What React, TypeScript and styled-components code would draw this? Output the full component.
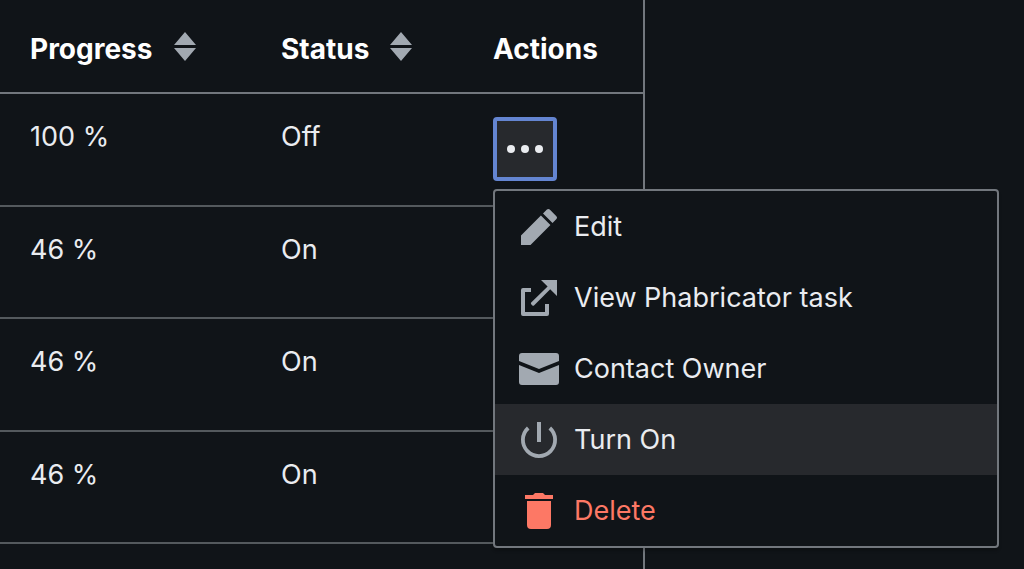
import React from "react";
import styled, { createGlobalStyle, css } from "styled-components";

const color = {
  base: "#101418",
  raised: "#27292d",
  border: "#72777d",
  divider: "#54595d",
  text: "#eaecf0",
  heading: "#ffffff",
  icon: "#a2a9b1",
  focus: "#6485d1",
  danger: "#fd7865",
};

const GlobalStyle = createGlobalStyle`
  *, *::before, *::after { box-sizing: border-box; }
  body {
    margin: 0;
    background: ${color.base};
    color: ${color.text};
    font-family: Inter, "Liberation Sans", sans-serif;
    font-size: 27px;
    line-height: 40px;
  }
`;

const Page = styled.main`
  display: flex;
  min-height: 100vh;
`;

const Panel = styled.section`
  flex: 0 0 63%;
  min-width: 620px;
  border-right: 2px solid ${color.border};
`;

const Table = styled.table`
  width: 100%;
  table-layout: fixed;
  border-collapse: separate;
  border-spacing: 0;
`;

const HeadCell = styled.th<{ $width?: number }>`
  width: ${(p) => (p.$width ? `${p.$width}px` : "auto")};
  height: 94px;
  padding: 6px 0 0 30px;
  border-bottom: 2px solid ${color.border};
  color: ${color.heading};
  font-size: 28px;
  font-weight: 700;
  text-align: left;
  vertical-align: middle;
`;

const SortButton = styled.button`
  display: flex;
  align-items: center;
  gap: 21px;
  padding: 0;
  border: 0;
  background: none;
  color: inherit;
  font: inherit;
  cursor: pointer;
`;

const SortIcon = styled.svg`
  flex: none;
  width: 22px;
  height: 29px;
  margin-bottom: 6px;
  fill: ${color.icon};
`;

const Row = styled.tr`
  height: 112px;
  &:nth-child(odd) { height: 113px; }
`;

const Cell = styled.td`
  padding: 23px 0 0 30px;
  border-bottom: 2px solid ${color.divider};
  vertical-align: top;
`;

const MenuAnchor = styled.div`
  position: relative;
  width: 64px;
`;

const MoreButton = styled.button<{ $open: boolean }>`
  display: flex;
  align-items: center;
  justify-content: center;
  width: 64px;
  height: 64px;
  padding: 0;
  border: 4px solid transparent;
  border-radius: 4px;
  background: none;
  color: ${color.text};
  cursor: pointer;
  ${(p) =>
    p.$open &&
    css`
      border-color: ${color.focus};
      background: ${color.raised};
    `}
`;

const Menu = styled.ul`
  position: absolute;
  z-index: 1;
  top: 72px;
  left: 0;
  width: 506px;
  margin: 0;
  padding: 0;
  border: 2px solid ${color.border};
  border-radius: 4px;
  background: ${color.base};
  box-shadow: 0 3px 3px rgba(0, 0, 0, 0.2);
  list-style: none;
`;

const MenuItem = styled.button<{ $active?: boolean; $danger?: boolean }>`
  display: flex;
  align-items: center;
  gap: 15px;
  width: 100%;
  height: 71px;
  padding: 0 24px;
  border: 0;
  background: ${(p) => (p.$active ? color.raised : "transparent")};
  color: ${(p) => (p.$danger ? color.danger : color.text)};
  font: inherit;
  text-align: left;
  cursor: pointer;
`;

const MenuIcon = styled.svg<{ $danger?: boolean }>`
  flex: none;
  width: 40px;
  height: 40px;
  color: ${(p) => (p.$danger ? color.danger : color.icon)};
  fill: currentColor;
`;

type Action = { label: string; icon: React.ReactNode; active?: boolean; danger?: boolean };

const actions: Action[] = [
  {
    label: "Edit",
    icon: <path d="m16.77 8 1.94-2a1 1 0 0 0 0-1.410l-3.340-3.300a1 1 0 0 0-1.410 0L12 3.230zM1 14.250V19h4.750l9.960-9.960-4.750-4.750z" />,
  },
  {
    label: "View Phabricator task",
    icon: (
      <>
        <path d="M6 5H2a1 1 0 0 0-1 1v12a1 1 0 0 0 1 1h12a1 1 0 0 0 1-1v-5h-2v4H3V7h3z" />
        <path d="M11 1h8v8l-3.400-3.400-8.100 8.100a.6.6 0 0 1-.8 0l-.6-.6a.6.6 0 0 1 0-.8l8.200-8z" />
      </>
    ),
  },
  {
    label: "Contact Owner",
    icon: <path d="m0 8 10 4 10-4v8.500a1.500 1.500 0 0 1-1.500 1.500h-17A1.500 1.500 0 0 1 0 16.500zM1.500 2h17A1.500 1.500 0 0 1 20 3.500V6l-10 4L0 6V3.500A1.500 1.500 0 0 1 1.500 2z" />,
  },
  {
    label: "Turn On",
    active: true,
    icon: (
      <>
        <path d="M4.600 4A8.050 8.050 0 1 0 15.400 4" fill="none" stroke="currentColor" strokeWidth="1.9" />
        <path d="M9 1h2v10H9z" />
      </>
    ),
  },
  {
    label: "Delete",
    danger: true,
    icon: <path d="M4 17a2 2 0 0 0 2 2h8a2 2 0 0 0 2-2V5H4zM13 2l-1-1H8L7 2H3v2h14V2z" />,
  },
];

const rows = [
  { progress: "100 %", status: "Off" },
  { progress: "46 %", status: "On" },
  { progress: "46 %", status: "On" },
  { progress: "46 %", status: "On" },
];

function SortHeader({ label, width }: { label: string; width: number }) {
  return (
    <HeadCell scope="col" $width={width}>
      <SortButton type="button">
        {label}
        <SortIcon viewBox="0 0 22 29" aria-hidden="true">
          <path d="M11 0 22 13H0zM0 16h22L11 29z" />
        </SortIcon>
      </SortButton>
    </HeadCell>
  );
}

export default function App() {
  return (
    <>
      <GlobalStyle />
      <Page>
        <Panel>
          <Table>
            <thead>
              <tr>
                <SortHeader label="Progress" width={251} />
                <SortHeader label="Status" width={212} />
                <HeadCell scope="col">Actions</HeadCell>
              </tr>
            </thead>
            <tbody>
              {rows.map((row, index) => (
                <Row key={index}>
                  <Cell>{row.progress}</Cell>
                  <Cell>{row.status}</Cell>
                  <Cell>
                    <MenuAnchor>
                      <MoreButton type="button" $open={index === 0} aria-label="More actions" aria-expanded={index === 0}>
                        <svg width="36" height="8" viewBox="0 0 36 8" fill="currentColor" aria-hidden="true">
                          <circle cx="4" cy="4" r="4" />
                          <circle cx="18" cy="4" r="4" />
                          <circle cx="32" cy="4" r="4" />
                        </svg>
                      </MoreButton>
                      {index === 0 && (
                        <Menu>
                          {actions.map((action) => (
                            <li key={action.label}>
                              <MenuItem type="button" $active={action.active} $danger={action.danger}>
                                <MenuIcon viewBox="0 0 20 20" $danger={action.danger} aria-hidden="true">
                                  {action.icon}
                                </MenuIcon>
                                {action.label}
                              </MenuItem>
                            </li>
                          ))}
                        </Menu>
                      )}
                    </MenuAnchor>
                  </Cell>
                </Row>
              ))}
            </tbody>
          </Table>
        </Panel>
      </Page>
    </>
  );
}
